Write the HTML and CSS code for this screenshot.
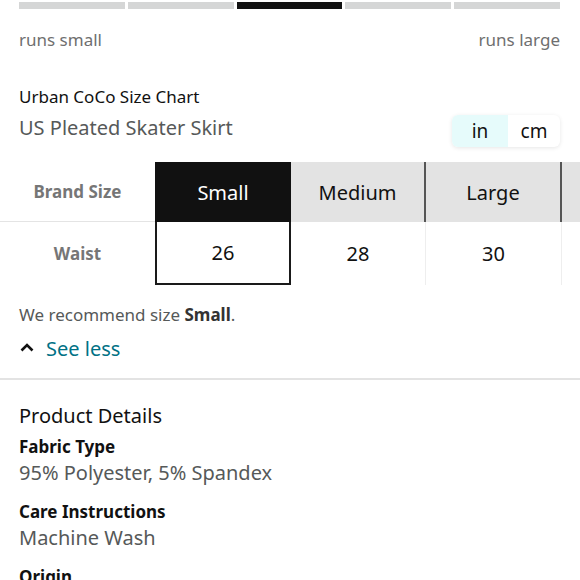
FILE: index.html
```html
<!DOCTYPE html>
<html>
<head>
<meta charset="utf-8">
<link rel="stylesheet" href="styles.css">
</head>
<body>
<div class="page">
  <div class="scale">
    <span class="seg"></span><span class="seg"></span><span class="seg on"></span><span class="seg"></span><span class="seg"></span>
  </div>
  <div class="scale-labels"><span>runs small</span><span>runs large</span></div>

  <div class="chart-head">
    <div class="chart-titles">
      <div class="chart-brand">Urban CoCo Size Chart</div>
      <div class="chart-name">US Pleated Skater Skirt</div>
    </div>
    <div class="unit-toggle">
      <span class="unit active">in</span><span class="unit">cm</span>
    </div>
  </div>

  <div class="size-table">
    <div class="cell label head">Brand Size</div>
    <div class="cell hcell selected">Small</div>
    <div class="cell hcell">Medium</div>
    <div class="cell hcell">Large</div>
    <div class="cell hcell"></div>
    <div class="cell label">Waist</div>
    <div class="cell vcell selected">26</div>
    <div class="cell vcell">28</div>
    <div class="cell vcell">30</div>
    <div class="cell vcell"></div>
  </div>

  <p class="recommend">We recommend size <b>Small</b>.</p>
  <div class="see-less">
    <svg class="chev" width="16" height="12" viewBox="0 0 16 12"><path d="M2.5 9.5 L8 4 L13.5 9.5" fill="none" stroke="#111" stroke-width="2.6"/></svg>
    <span>See less</span>
  </div>

  <hr class="divider">

  <section class="details">
    <h2>Product Details</h2>
    <div class="dt">Fabric Type</div>
    <div class="dd">95% Polyester, 5% Spandex</div>
    <div class="dt">Care Instructions</div>
    <div class="dd">Machine Wash</div>
    <div class="dt">Origin</div>
  </section>
</div>
</body>
</html>
```

FILE: styles.css
```css
* { box-sizing: border-box; }
html, body { margin: 0; padding: 0; background: #fff; }
body { font-family: "Noto Sans", "Open Sans", sans-serif; color: #111; overflow: hidden; }
.page { width: 580px; height: 580px; overflow: hidden; }

.scale { display: grid; grid-template-columns: repeat(5, 1fr); gap: 3px; margin: 2px 20px 0 19px; height: 7px; }
.seg { background: #d5d6d6; }
.seg.on { background: #111; }

.scale-labels { display: flex; justify-content: space-between; margin: 20px 20px 0 19px; font-size: 17px; line-height: 22px; color: #6f6f6f; }

.chart-head { display: flex; justify-content: space-between; align-items: flex-start; margin: 35px 20px 0 19px; }
.chart-brand { font-size: 17px; line-height: 22px; color: #111; }
.chart-name { font-size: 20px; line-height: 28px; color: #565959; margin-top: 6px; }
.unit-toggle { display: flex; border-radius: 6px; box-shadow: 0 1px 4px rgba(0,0,0,0.10); margin-top: 29px; }
.unit { width: 52px; height: 32px; display: flex; align-items: center; justify-content: center; font-size: 19px; color: #111; }
.unit.active { background: #e6fbfb; border-radius: 6px 0 0 6px; width: 56px; }

.size-table { display: grid; grid-template-columns: 155px 136px 135px 136px 136px; grid-template-rows: 60px 63px; margin-top: 15px; width: 698px; }
.cell { display: flex; align-items: center; justify-content: center; font-size: 20px; color: #111; }
.label { font-weight: 700; font-size: 17px; color: #767676; }
.label.head { border-bottom: 1px solid #e4e4e4; }
.hcell { background: #e3e3e3; border-right: 2px solid #555; }
.hcell.selected { background: #111; color: #fff; border-right: 0; }
.vcell { border-right: 1px solid #eeeeee; }
.vcell.selected { border: 2px solid #1a1a1a; border-top: 0; }

.recommend { margin: 19px 20px 0 19px; font-size: 17px; line-height: 22px; color: #565959; }
.recommend b { color: #333; }
.see-less { display: flex; align-items: center; margin: 9px 0 0 19px; height: 26px; font-size: 20px; color: #007185; gap: 11px; }
.chev { display: block; margin-top: -3px; }

.divider { border: 0; height: 2px; background: #e3e3e3; margin: 17px 0 0 0; }

.details { padding: 0 20px 0 19px; }
.details h2 { font-weight: 400; font-size: 20px; line-height: 26px; margin: 23px 0 0 0; color: #111; }
.dt { font-weight: 700; font-size: 17px; line-height: 22px; color: #111; margin-top: 7px; }
.dd { font-size: 20px; line-height: 26px; color: #565959; margin-top: 2px; }
.dd + .dt { margin-top: 15px; }
```
